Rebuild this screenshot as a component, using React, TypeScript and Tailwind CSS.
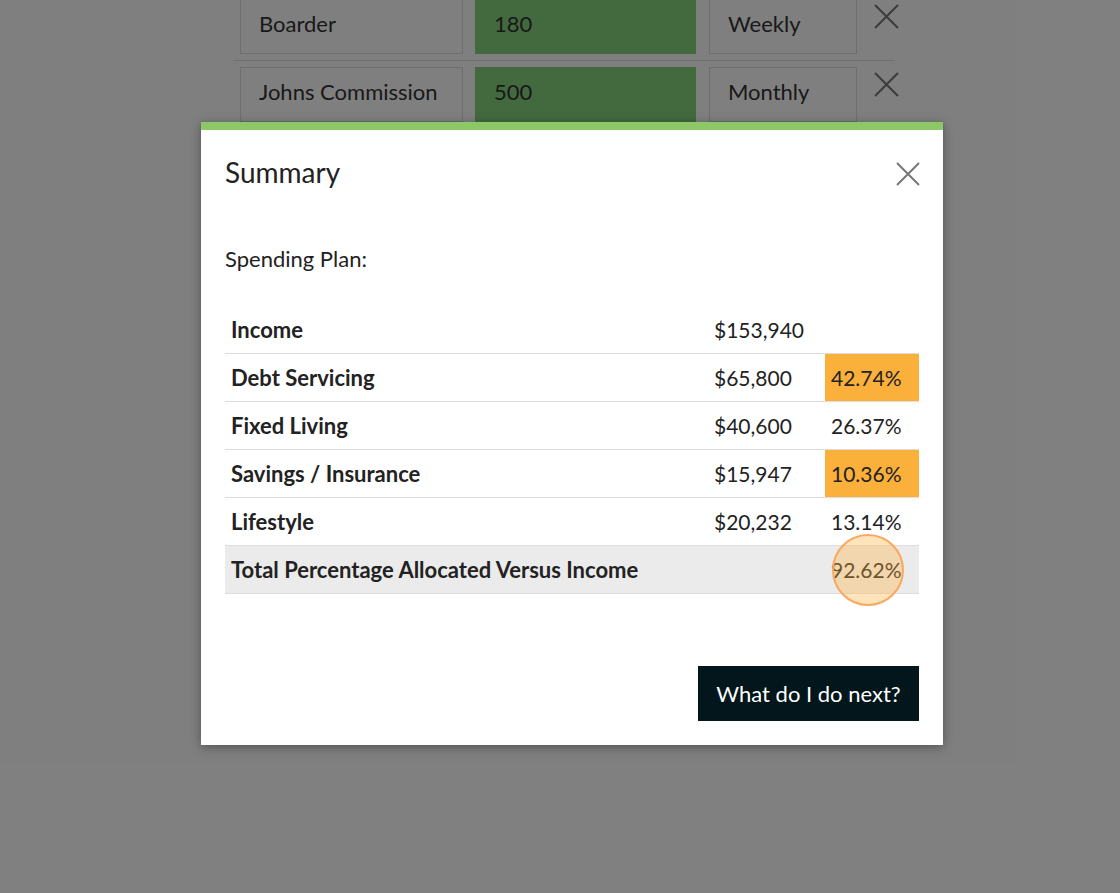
import React from "react";

interface IncomeRowProps {
  name: string;
  amount: string;
  period: string;
}

interface SummaryRowProps {
  label: string;
  amount?: string;
  percent?: string;
  highlight?: boolean;
}

const CloseIcon = ({ className }: { className: string }) => (
  <svg viewBox="0 0 24 24" className={className} fill="none" stroke="currentColor" strokeWidth={2}>
    <path d="M1 1L23 23M23 1L1 23" />
  </svg>
);

const IncomeRow = ({ name, amount, period }: IncomeRowProps) => (
  <div className="flex items-center py-[6px] pl-[7px] border-b border-[#e0e0e0]">
    <div className="shrink-0 w-[223px] h-[55px] flex items-center pl-[18px] pb-[6px] border border-[#dcdcdc] bg-white text-[22px] text-[#333]">
      {name}
    </div>
    <div className="shrink-0 ml-[12px] w-[221px] h-[55px] flex items-center pl-[19px] pb-[6px] bg-[#86d47e] text-[22px] text-[#333]">
      {amount}
    </div>
    <div className="shrink-0 ml-[13px] w-[148px] h-[55px] flex items-center pl-[18px] pb-[6px] border border-[#dcdcdc] bg-white text-[22px] text-[#333]">
      {period}
    </div>
    <CloseIcon className="shrink-0 ml-[17px] w-[25px] h-[25px] text-[#787878] -mt-[20px]" />
  </div>
);

const SummaryRow = ({ label, amount, percent, highlight }: SummaryRowProps) => (
  <div className="flex h-[48px] border-b border-[#dddddd] items-stretch">
    <div className="flex-1 flex items-center pl-[6px] font-bold text-[22px] text-[#222]">{label}</div>
    <div className="w-[117px] flex items-center pl-[6px] text-[21px] text-[#222]">{amount}</div>
    <div
      className={`w-[94px] flex items-center pl-[6px] text-[21px] text-[#222] ${
        highlight ? "bg-[#fbb03b]" : ""
      }`}
    >
      {percent}
    </div>
  </div>
);

export default function App() {
  return (
    <div className="relative min-h-[893px] bg-white overflow-hidden" style={{ fontFamily: "Lato, 'Open Sans', sans-serif" }}>
      {/* page underneath */}
      <div className="ml-[233px] w-[662px] -mt-[7px]">
        <IncomeRow name="Boarder" amount="180" period="Weekly" />
        <IncomeRow name="Johns Commission" amount="500" period="Monthly" />
      </div>

      {/* backdrop */}
      <div className="absolute inset-0 bg-black/50" />

      {/* modal */}
      <div className="absolute left-[201px] top-[122px] w-[742px] bg-white border-t-[8px] border-[#8cc867] shadow-[0_2px_10px_rgba(0,0,0,0.35)] px-[24px] pb-[24px]">
        <div className="flex items-center justify-between h-[86px] pb-[2px]">
          <h2 className="text-[28px] text-[#222]">Summary</h2>
          <CloseIcon className="w-[24px] h-[24px] text-[#777] -mr-[1px] mt-[3px]" />
        </div>
        <p className="mt-[28px] text-[22px] text-[#222] leading-[30px]">Spending Plan:</p>
        <div className="mt-[32px]">
          <SummaryRow label="Income" amount="$153,940" />
          <SummaryRow label="Debt Servicing" amount="$65,800" percent="42.74%" highlight />
          <SummaryRow label="Fixed Living" amount="$40,600" percent="26.37%" />
          <SummaryRow label="Savings / Insurance" amount="$15,947" percent="10.36%" highlight />
          <SummaryRow label="Lifestyle" amount="$20,232" percent="13.14%" />
          <div className="relative flex h-[48px] border-b border-[#dddddd] bg-[#ebebeb] items-stretch">
            <div className="flex-1 flex items-center pl-[6px] font-bold text-[22px] text-[#222]">
              Total Percentage Allocated Versus Income
            </div>
            <div className="w-[94px] flex items-center pl-[6px] text-[21px] text-[#222]">92.62%</div>
            <div className="absolute left-[607px] top-[-12px] w-[72px] h-[72px] rounded-full border-2 border-[#f9a85e] bg-[#fbb03b]/35" />
          </div>
        </div>
        <div className="flex justify-end mt-[72px]">
          <button className="h-[55px] w-[221px] bg-[#02161c] text-white text-[22px]">What do I do next?</button>
        </div>
      </div>
    </div>
  );
}
